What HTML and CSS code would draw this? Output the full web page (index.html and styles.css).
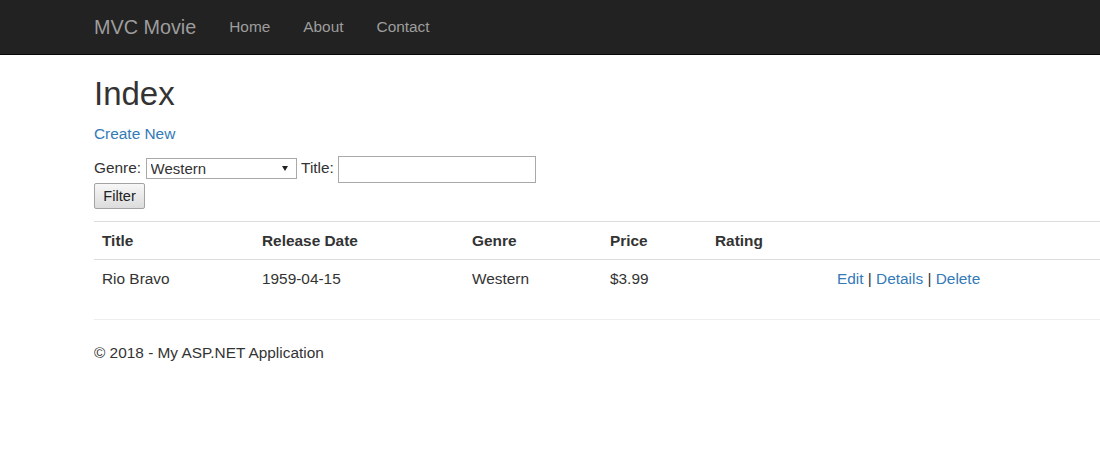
FILE: index.html
```html
<!DOCTYPE html>
<html lang="en">
<head>
<meta charset="utf-8">
<title>Index - Movie App</title>
<link rel="stylesheet" href="styles.css">
</head>
<body>
<nav class="navbar">
  <div class="nav-inner">
    <a class="brand" href="#">MVC Movie</a>
    <ul class="nav-links">
      <li><a href="#">Home</a></li>
      <li><a href="#">About</a></li>
      <li><a href="#">Contact</a></li>
    </ul>
  </div>
</nav>
<div class="body-content">
  <h2 class="page-title">Index</h2>
  <p class="create"><a href="#">Create New</a></p>
  <form class="filter-form">
    <div class="filter-row">
      <span class="label">Genre:</span>
      <span class="select-wrap">
        <select class="genre-select">
          <option>All</option>
          <option selected>Western</option>
        </select>
        <span class="select-arrow"></span>
      </span>
      <span class="label">Title:</span>
      <input class="title-input" type="text">
    </div>
    <div class="button-row">
      <button type="button" class="filter-btn">Filter</button>
    </div>
  </form>
  <table class="movies">
    <colgroup>
      <col class="c-title">
      <col class="c-date">
      <col class="c-genre">
      <col class="c-price">
      <col class="c-rating">
      <col>
    </colgroup>
    <tr>
      <th>Title</th>
      <th>Release Date</th>
      <th>Genre</th>
      <th>Price</th>
      <th>Rating</th>
      <th></th>
    </tr>
    <tr>
      <td>Rio Bravo</td>
      <td>1959-04-15</td>
      <td>Western</td>
      <td>$3.99</td>
      <td></td>
      <td><a href="#">Edit</a> | <a href="#">Details</a> | <a href="#">Delete</a></td>
    </tr>
  </table>
  <hr class="rule">
  <footer class="footer">
    <p>&copy; 2018 - My ASP.NET Application</p>
  </footer>
</div>
</body>
</html>
```
FILE: styles.css
```css
html, body {
  margin: 0;
  padding: 0;
  overflow: hidden;
  background: #fff;
}
body {
  font-family: "Liberation Sans", Arial, Helvetica, sans-serif;
  font-size: 15.4px;
  line-height: 22px;
  color: #333;
}
a {
  color: #337ab7;
  text-decoration: none;
}

/* navbar */
.navbar {
  height: 54px;
  background: #222;
  border-bottom: 1px solid #080808;
}
.nav-inner {
  display: flex;
  padding-left: 94px;
  height: 54px;
}
.brand {
  color: #9d9d9d;
  font-size: 19.8px;
  line-height: 22px;
  padding-top: 15.5px;
  padding-right: 16.5px;
}
.nav-links {
  display: flex;
  list-style: none;
  margin: 0;
  padding: 0;
}
.nav-links a {
  display: block;
  color: #9d9d9d;
  line-height: 22px;
  padding: 16px 16.5px;
}

/* content */
.body-content {
  padding-left: 94px;
}
.page-title {
  font-size: 33px;
  font-weight: 500;
  line-height: 36px;
  margin: 21px 0 11px;
}
.create {
  margin: 0 0 11px;
}
.filter-form {
  margin: 0 0 12px;
}
.filter-row {
  display: flex;
  align-items: flex-start;
  gap: 4.5px;
  height: 27px;
}
.label {
  margin-top: 1px;
}
.select-wrap {
  position: relative;
  display: block;
  height: 21px;
  margin-top: 1.5px;
}
.genre-select {
  appearance: none;
  -webkit-appearance: none;
  display: block;
  width: 151px;
  height: 21px;
  margin: 0;
  padding: 0 0 0 4px;
  border: 1px solid #a9a9a9;
  border-radius: 0;
  background: #fff;
  color: #333;
  font-family: "Liberation Sans", Arial, sans-serif;
  font-size: 15px;
  line-height: 19px;
  box-sizing: border-box;
}
.select-arrow {
  position: absolute;
  right: 9px;
  top: 8px;
  width: 0;
  height: 0;
  border-left: 3px solid transparent;
  border-right: 3px solid transparent;
  border-top: 5px solid #222;
  pointer-events: none;
}
.title-input {
  width: 198px;
  height: 27px;
  margin: 0;
  padding: 0 3px;
  border: 1px solid #a9a9a9;
  box-sizing: border-box;
  font-family: "Liberation Sans", Arial, sans-serif;
  font-size: 14.67px;
}
.button-row {
  height: 26px;
}
.filter-btn {
  display: block;
  width: 51px;
  height: 26px;
  margin: 0;
  padding: 0;
  border: 1px solid #a3a3a3;
  border-radius: 2px;
  background: linear-gradient(#f7f7f7, #dcdcdc);
  color: #222;
  font-family: "Liberation Sans", Arial, sans-serif;
  font-size: 14.67px;
  line-height: 24px;
  box-sizing: border-box;
}

/* table */
.movies {
  width: 1006px;
  table-layout: fixed;
  border-collapse: collapse;
  border-spacing: 0;
  margin: 0;
}
.c-title { width: 160px; }
.c-date { width: 210px; }
.c-genre { width: 138px; }
.c-price { width: 105px; }
.c-rating { width: 122px; }
.movies th,
.movies td {
  text-align: left;
  padding: 8px;
  line-height: 21px;
  border-top: 1px solid #ddd;
  vertical-align: top;
}
.movies th {
  font-weight: bold;
}

.rule {
  border: 0;
  border-top: 1px solid #eee;
  margin: 22px 0 22px;
  height: 0;
}
.footer p {
  margin: 0;
}
```
